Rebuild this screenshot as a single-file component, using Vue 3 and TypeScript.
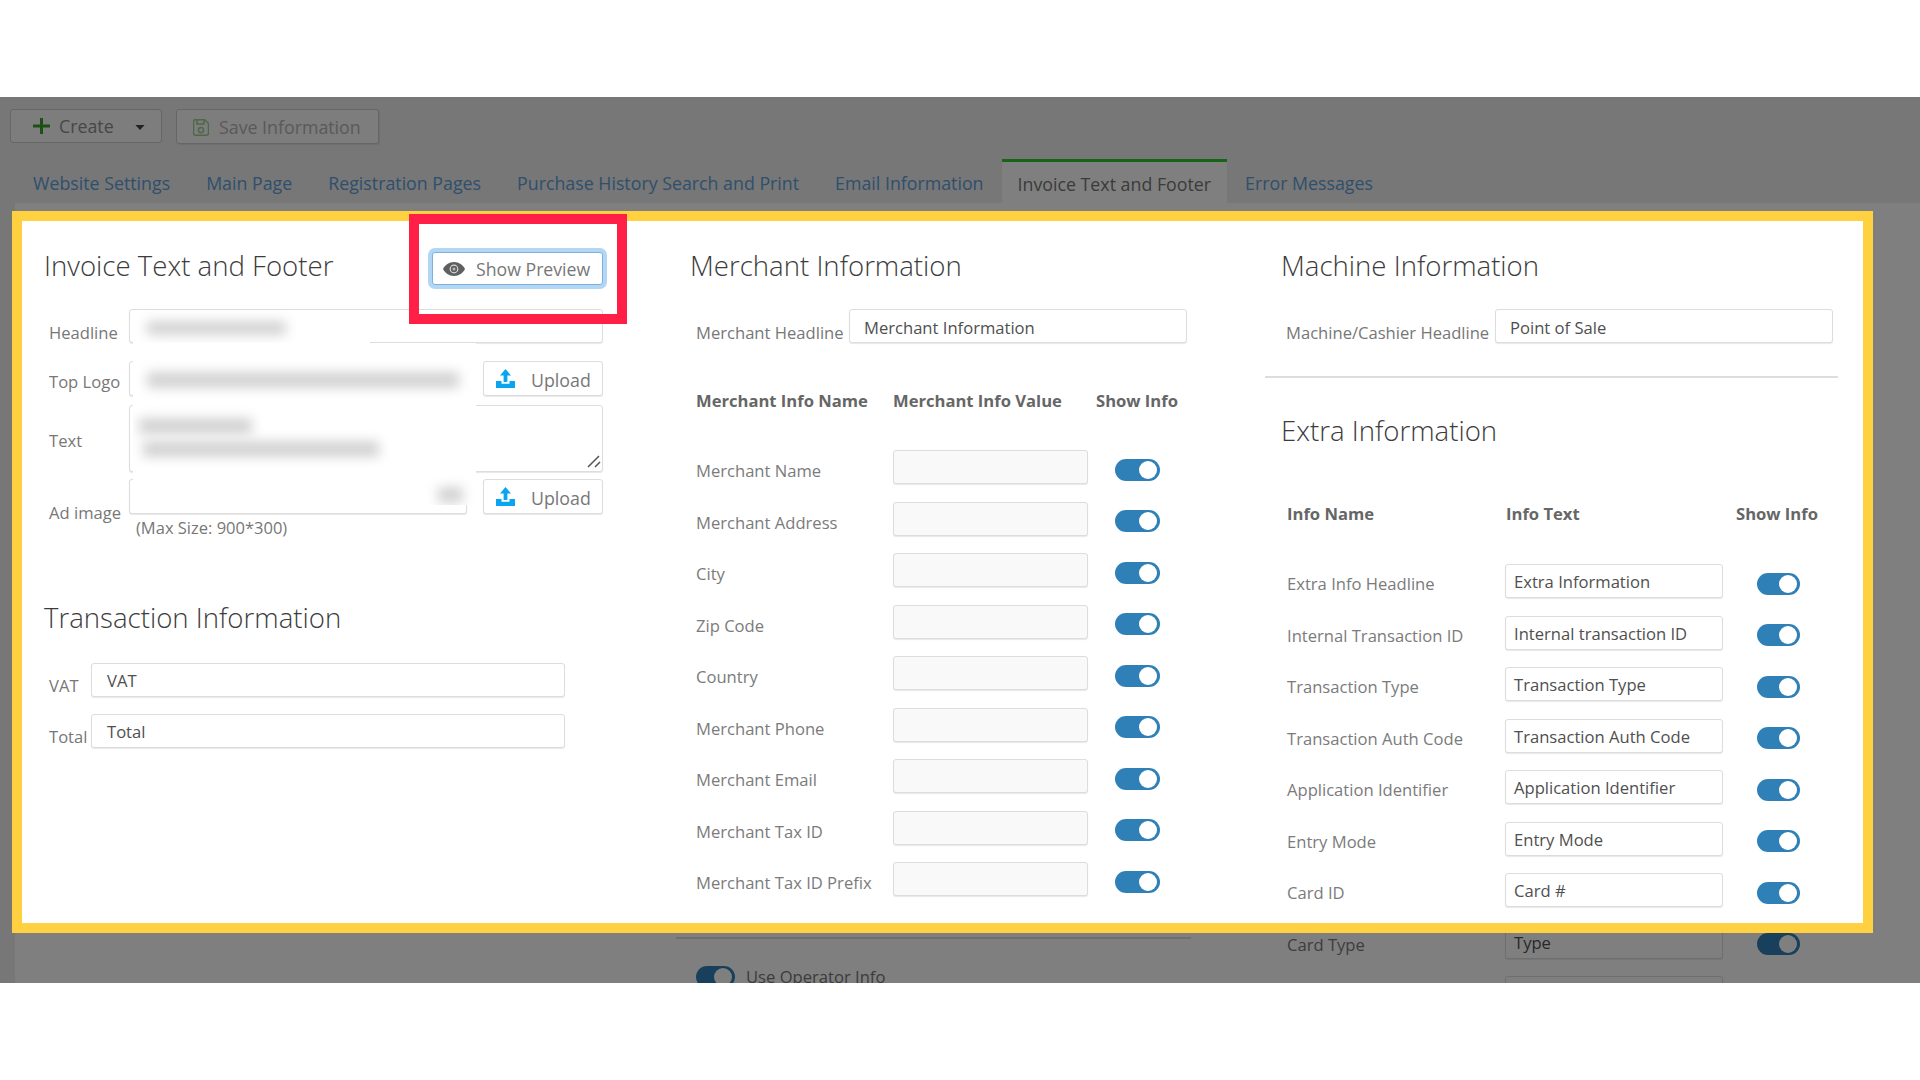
<script setup lang="ts">
const tabs: { label: string; active?: boolean }[] = [
  { label: 'Website Settings' },
  { label: 'Main Page' },
  { label: 'Registration Pages' },
  { label: 'Purchase History Search and Print' },
  { label: 'Email Information' },
  { label: 'Invoice Text and Footer', active: true },
  { label: 'Error Messages' },
]

const merchantRows: string[] = [
  'Merchant Name',
  'Merchant Address',
  'City',
  'Zip Code',
  'Country',
  'Merchant Phone',
  'Merchant Email',
  'Merchant Tax ID',
  'Merchant Tax ID Prefix',
]

const extraRows: { name: string; text: string }[] = [
  { name: 'Extra Info Headline', text: 'Extra Information' },
  { name: 'Internal Transaction ID', text: 'Internal transaction ID' },
  { name: 'Transaction Type', text: 'Transaction Type' },
  { name: 'Transaction Auth Code', text: 'Transaction Auth Code' },
  { name: 'Application Identifier', text: 'Application Identifier' },
  { name: 'Entry Mode', text: 'Entry Mode' },
  { name: 'Card ID', text: 'Card #' },
  { name: 'Card Type', text: 'Type' },
  { name: '', text: '' },
]
</script>

<template>
  <div class="page">
    <div class="stage">
      <div class="toolbar">
        <button class="btn btn-create" type="button">
          <svg class="ico-plus" viewBox="0 0 17 16" aria-hidden="true"><path d="M7 0h3v6.500h7v3h-7V16H7V9.500H0v-3h7z" /></svg>
          <span class="create-label">Create</span>
          <svg class="ico-caret" viewBox="0 0 11 6" aria-hidden="true"><path d="M0 0h11L5.500 6z" /></svg>
        </button>
        <button class="btn btn-save" type="button">
          <svg class="ico-save" viewBox="0 0 16 17" aria-hidden="true">
            <path d="M1.500.75h10.200l3.800 3.800v10a1.700 1.700 0 0 1-1.700 1.700H2.200a1.700 1.700 0 0 1-1.700-1.700V1.500z" />
            <path d="M4 1v4h7V1" />
            <circle cx="8" cy="11" r="2.600" />
          </svg>
          <span>Save Information</span>
        </button>
      </div>

      <nav class="tabs">
        <a v-for="tab in tabs" :key="tab.label" class="tab" :class="{ active: tab.active }">{{ tab.label }}</a>
      </nav>

      <div class="content">
        <section class="col col-left">
          <div class="head-row">
            <h2 class="title">Invoice Text and Footer</h2>
            <button class="btn-preview" type="button">
              <svg class="ico-eye" viewBox="0 0 22 14" aria-hidden="true">
                <path d="M11 0C6 0 2 3 0 7c2 4 6 7 11 7s9-3 11-7c-2-4-6-7-11-7z" />
                <circle class="eye-ring" cx="11" cy="7" r="4.400" />
                <circle cx="11" cy="7" r="3.200" />
                <circle class="eye-glint" cx="11" cy="7" r="1.500" />
              </svg>
              <span>Show Preview</span>
            </button>
          </div>

          <div class="row">
            <label class="lbl lbl-form">Headline</label>
            <div class="field grow"></div>
          </div>
          <div class="row row-logo">
            <label class="lbl lbl-form lbl-logo">Top Logo</label>
            <div class="field tall grow"></div>
            <button class="btn-upload" type="button">
              <svg class="ico-upload" viewBox="0 0 19 19" aria-hidden="true"><path d="M9.500 0l5.500 6.500h-3.600V13H7.600V6.500H4zM0 12h5.500v2.800h8V12H19v7H0z" /></svg>
              <span>Upload</span>
            </button>
          </div>
          <div class="row row-text">
            <label class="lbl lbl-form lbl-text">Text</label>
            <div class="field area grow">
              <svg class="ico-resize" viewBox="0 0 14 13" aria-hidden="true"><path d="M1 12L12 1M8 12l5-5" /></svg>
            </div>
          </div>
          <div class="row row-ad">
            <label class="lbl lbl-form lbl-ad">Ad image</label>
            <div class="field tall grow"></div>
            <button class="btn-upload" type="button">
              <svg class="ico-upload" viewBox="0 0 19 19" aria-hidden="true"><path d="M9.500 0l5.500 6.500h-3.600V13H7.600V6.500H4zM0 12h5.500v2.800h8V12H19v7H0z" /></svg>
              <span>Upload</span>
            </button>
          </div>
          <p class="hint">(Max Size: 900*300)</p>

          <h2 class="title title-trans">Transaction Information</h2>
          <div class="row row-vat">
            <label class="lbl lbl-short">VAT</label>
            <div class="field grow">VAT</div>
          </div>
          <div class="row row-vat row-total">
            <label class="lbl lbl-short">Total</label>
            <div class="field grow">Total</div>
          </div>

          <div class="veil veil-head"><i class="blob blob-head"></i></div>
          <div class="veil veil-body">
            <i class="blob blob-logo"></i>
            <i class="blob blob-line1"></i>
            <i class="blob blob-line2"></i>
            <i class="blob blob-ad"></i>
          </div>
        </section>

        <section class="col col-mid">
          <h2 class="title head-title">Merchant Information</h2>
          <div class="row row-merchant">
            <label class="lbl lbl-merchant">Merchant Headline</label>
            <div class="field field-head grow">Merchant Information</div>
          </div>

          <div class="thead thead-merchant">
            <span class="th-name">Merchant Info Name</span>
            <span class="th-value">Merchant Info Value</span>
            <span>Show Info</span>
          </div>

          <div class="tbody tbody-merchant">
            <div v-for="name in merchantRows" :key="name" class="trow">
              <span class="tname">{{ name }}</span>
              <div class="field muted merchant-input"></div>
              <span class="toggle merchant-toggle"><i></i></span>
            </div>
          </div>

          <hr class="rule-mid" />
          <div class="operator">
            <span class="toggle toggle-op"><i></i></span>
            <span>Use Operator Info</span>
          </div>
        </section>

        <section class="col col-right">
          <h2 class="title head-title">Machine Information</h2>
          <div class="row row-machine">
            <label class="lbl lbl-machine">Machine/Cashier Headline</label>
            <div class="field field-head grow">Point of Sale</div>
          </div>
          <hr class="rule-right" />
          <h2 class="title title-extra">Extra Information</h2>

          <div class="thead thead-extra">
            <span class="th-info">Info Name</span>
            <span class="th-text">Info Text</span>
            <span>Show Info</span>
          </div>

          <div class="tbody tbody-extra">
            <div v-for="row in extraRows" :key="row.name + row.text" class="trow">
              <span class="tname tname-extra">{{ row.name }}</span>
              <div class="field extra-input">{{ row.text }}</div>
              <span class="toggle extra-toggle"><i></i></span>
            </div>
          </div>
        </section>
      </div>

      <div class="spot"></div>
      <div class="callout"></div>
    </div>
  </div>
</template>

<style>
html,
body {
  margin: 0;
  background: #fff;
}
</style>

<style scoped>
.page {
  height: 1080px;
  padding-top: 97px;
  box-sizing: border-box;
  background: #fff;
  font-family: "Open Sans", "Noto Sans", sans-serif;
  color: #666;
  overflow: hidden;
}
.stage {
  position: relative;
  height: 886px;
  overflow: hidden;
  background: #eee;
}
.toolbar {
  display: flex;
  gap: 14px;
  height: 62px;
  padding: 12px 10px 0;
  box-sizing: border-box;
}
.btn,
.btn-preview,
.btn-upload {
  font-family: inherit;
  display: flex;
  align-items: center;
  box-sizing: border-box;
  background: #fff;
  border-radius: 3px;
  padding: 0;
}
.btn {
  height: 34px;
  background: #fafafa;
  border: 1px solid #ccc;
  font-size: 17.800px;
}
.btn-create {
  width: 152px;
  padding-left: 22px;
  color: #8e8e8e;
}
.ico-plus {
  width: 17px;
  height: 16px;
  fill: #3aa02a;
}
.create-label {
  margin-left: 9px;
}
.ico-caret {
  width: 10px;
  height: 5px;
  margin-left: 21px;
  margin-top: 3px;
  fill: #444;
}
.btn-save {
  width: 203px;
  height: 35px;
  padding-left: 16px;
  padding-top: 1px;
  color: #b4b4b4;
  box-shadow: 1px 1px 1px #ddd;
}
.ico-save {
  width: 16px;
  height: 17px;
  margin-right: 10px;
  fill: none;
  stroke: #9ad08f;
  stroke-width: 1.500;
}
.tabs {
  display: flex;
  height: 44px;
  padding-left: 15px;
  box-sizing: border-box;
}
.tab {
  padding: 0 18px;
  font-size: 17.800px;
  line-height: 49px;
  color: #5f9fd8;
  white-space: nowrap;
}
.tab.active {
  padding: 0 16px;
  background: #fff;
  border-top: 3px solid #2ccb2c;
  line-height: 45px;
  color: #777;
}
.content {
  display: grid;
  grid-template-columns: 647px 590px 1fr;
  margin-left: 15px;
  padding-left: 13px;
  height: 780px;
  background: #fff;
}
.col {
  padding-top: 41px;
  padding-left: 16px;
}
.col-left {
  position: relative;
}
.title {
  margin: 0;
  font-size: 27.600px;
  font-weight: 300;
  line-height: 40px;
  color: #3c3c3c;
}
.col-mid > .title {
  margin-left: -1px;
}
.head-row {
  display: flex;
  justify-content: space-between;
  align-items: flex-end;
  width: 559px;
  height: 41px;
  margin-bottom: 24px;
}
.btn-preview {
  width: 171px;
  height: 33px;
  padding-left: 10px;
  border: 1px solid #7fb0dc;
  box-shadow: 0 0 0 4px rgba(102, 175, 233, 0.5);
  font-size: 17.700px;
  color: #777;
}
.ico-eye {
  width: 22px;
  height: 14px;
  margin-right: 11px;
  fill: #5f5f5f;
}
.eye-ring {
  fill: #d8d8d8;
}
.eye-glint {
  fill: #b5b5b5;
}
.row {
  display: flex;
  align-items: flex-start;
  width: 559px;
}
.lbl {
  display: block;
  box-sizing: border-box;
  padding-top: 14px;
  font-size: 16.600px;
  line-height: 20px;
  color: #777;
  white-space: nowrap;
}
.lbl-form {
  width: 85px;
  padding-left: 5px;
}
.field {
  box-sizing: border-box;
  height: 34px;
  border: 1px solid #ddd;
  border-radius: 3px;
  background: #fff;
  box-shadow: 0 1px 1px #e8e8e8;
  padding: 0 14px;
  font-size: 16.600px;
  line-height: 33px;
  color: #4f4f4f;
  white-space: nowrap;
}
.row-vat .field {
  padding: 0 15px;
}
.field-head {
  line-height: 35px;
}
.grow {
  flex: 1;
}
.tall {
  height: 35px;
}
.row-logo {
  gap: 16px;
  margin-top: 18px;
}
.lbl-logo {
  padding-top: 11px;
  margin-right: -16px;
}
.btn-upload {
  width: 120px;
  height: 35px;
  padding-left: 12px;
  padding-top: 2px;
  border: 1px solid #ddd;
  box-shadow: 0 1px 1px #e8e8e8;
  font-size: 17.800px;
  color: #777;
}
.ico-upload {
  width: 19px;
  height: 19px;
  margin-right: 16px;
  margin-top: -2px;
  fill: #0aa5f0;
}
.row-text {
  margin-top: 9px;
}
.lbl-text {
  padding-top: 26px;
}
.area {
  position: relative;
  height: 67px;
}
.ico-resize {
  position: absolute;
  right: 1px;
  bottom: 3px;
  width: 14px;
  height: 13px;
  fill: none;
  stroke: #555;
  stroke-width: 1.500;
}
.row-ad {
  gap: 16px;
  height: 35px;
  margin-top: 7px;
}
.lbl-ad {
  padding-top: 24px;
  margin-right: -16px;
}
.hint {
  margin: 4px 0 0 92px;
  font-size: 16.500px;
  line-height: 20px;
  color: #777;
}
.title-trans {
  margin-top: 59px;
  margin-bottom: 26px;
}
.row-vat {
  width: 521px;
}
.row-total {
  margin-top: 17px;
}
.row-vat .lbl {
  padding-top: 13px;
}
.lbl-short {
  width: 47px;
  padding-left: 5px;
}
.veil {
  position: absolute;
  background: #fff;
  overflow: hidden;
}
.veil-head {
  left: 105px;
  top: 107px;
  width: 237px;
  height: 33px;
}
.veil-body {
  left: 105px;
  top: 140px;
  width: 343px;
  height: 162px;
}
.blob {
  position: absolute;
  background: #d2d2d2;
  filter: blur(6px);
}
.blob-head {
  left: 14px;
  top: 11px;
  width: 139px;
  height: 14px;
}
.blob-logo {
  left: 14px;
  top: 29px;
  width: 312px;
  height: 16px;
}
.blob-line1 {
  left: 6px;
  top: 75px;
  width: 113px;
  height: 16px;
}
.blob-line2 {
  left: 10px;
  top: 98px;
  width: 236px;
  height: 16px;
}
.blob-ad {
  left: 305px;
  top: 144px;
  width: 25px;
  height: 16px;
}
.head-title {
  margin-top: 1px;
  margin-bottom: 24px;
}
.row-merchant {
  width: 496px;
}
.lbl-merchant {
  width: 158px;
  padding-left: 5px;
}
.thead {
  display: flex;
  font-size: 16.600px;
  font-weight: 700;
  line-height: 20px;
  color: #666;
  white-space: nowrap;
}
.thead-merchant {
  margin-top: 48px;
}
.th-name {
  width: 202px;
  padding-left: 5px;
  box-sizing: border-box;
}
.th-value {
  width: 203px;
}
.tbody {
  display: flex;
  flex-direction: column;
  gap: 17.500px;
}
.tbody-merchant {
  margin-top: 39px;
}
.trow {
  display: flex;
  align-items: flex-start;
  height: 34px;
}
.tname {
  box-sizing: border-box;
  width: 202px;
  padding-left: 5px;
  padding-top: 11px;
  font-size: 16.600px;
  line-height: 20px;
  color: #7b7b7b;
  white-space: nowrap;
}
.muted {
  background: #f9f9f9;
}
.merchant-input {
  width: 195px;
}
.toggle {
  position: relative;
  display: block;
  box-sizing: border-box;
  width: 45px;
  height: 22px;
  margin-top: 8.500px;
  border-radius: 11px;
  background: #3080b8;
}
.toggle i {
  position: absolute;
  right: 3px;
  top: 2px;
  width: 18px;
  height: 18px;
  border-radius: 50%;
  background: #fff;
}
.merchant-toggle {
  margin-left: 27px;
}
.rule-mid {
  width: 515px;
  height: 2px;
  margin: 41px 0 0 -15px;
  border: 0;
  background: #ddd;
}
.operator {
  display: flex;
  align-items: center;
  gap: 11px;
  margin-top: 27px;
  margin-left: 5px;
  font-size: 16.600px;
  line-height: 20px;
  color: #777;
}
.toggle-op {
  width: 39px;
  margin-top: 0;
}
.row-machine {
  width: 552px;
}
.lbl-machine {
  width: 214px;
  padding-left: 5px;
}
.rule-right {
  width: 573px;
  height: 2px;
  margin: 33px 0 0 -16px;
  border: 0;
  background: #ddd;
}
.title-extra {
  margin-top: 32px;
}
.thead-extra {
  margin-top: 54px;
}
.th-info {
  box-sizing: border-box;
  width: 225px;
  padding-left: 6px;
}
.th-text {
  width: 230px;
}
.tbody-extra {
  margin-top: 40px;
}
.tname-extra {
  width: 224px;
  padding-top: 10px;
  padding-left: 6px;
}
.extra-input {
  width: 218px;
  padding: 0 8px;
}
.extra-toggle {
  width: 43px;
  margin-left: 34px;
}
.spot {
  position: absolute;
  left: 12px;
  top: 114px;
  width: 1861px;
  height: 722px;
  box-sizing: border-box;
  border: 10px solid #ffd040;
  box-shadow: 0 0 0 3000px rgba(0, 0, 0, 0.5);
}
.callout {
  position: absolute;
  left: 409px;
  top: 117px;
  width: 218px;
  height: 110px;
  box-sizing: border-box;
  border: 10px solid #ff1f47;
}
</style>
